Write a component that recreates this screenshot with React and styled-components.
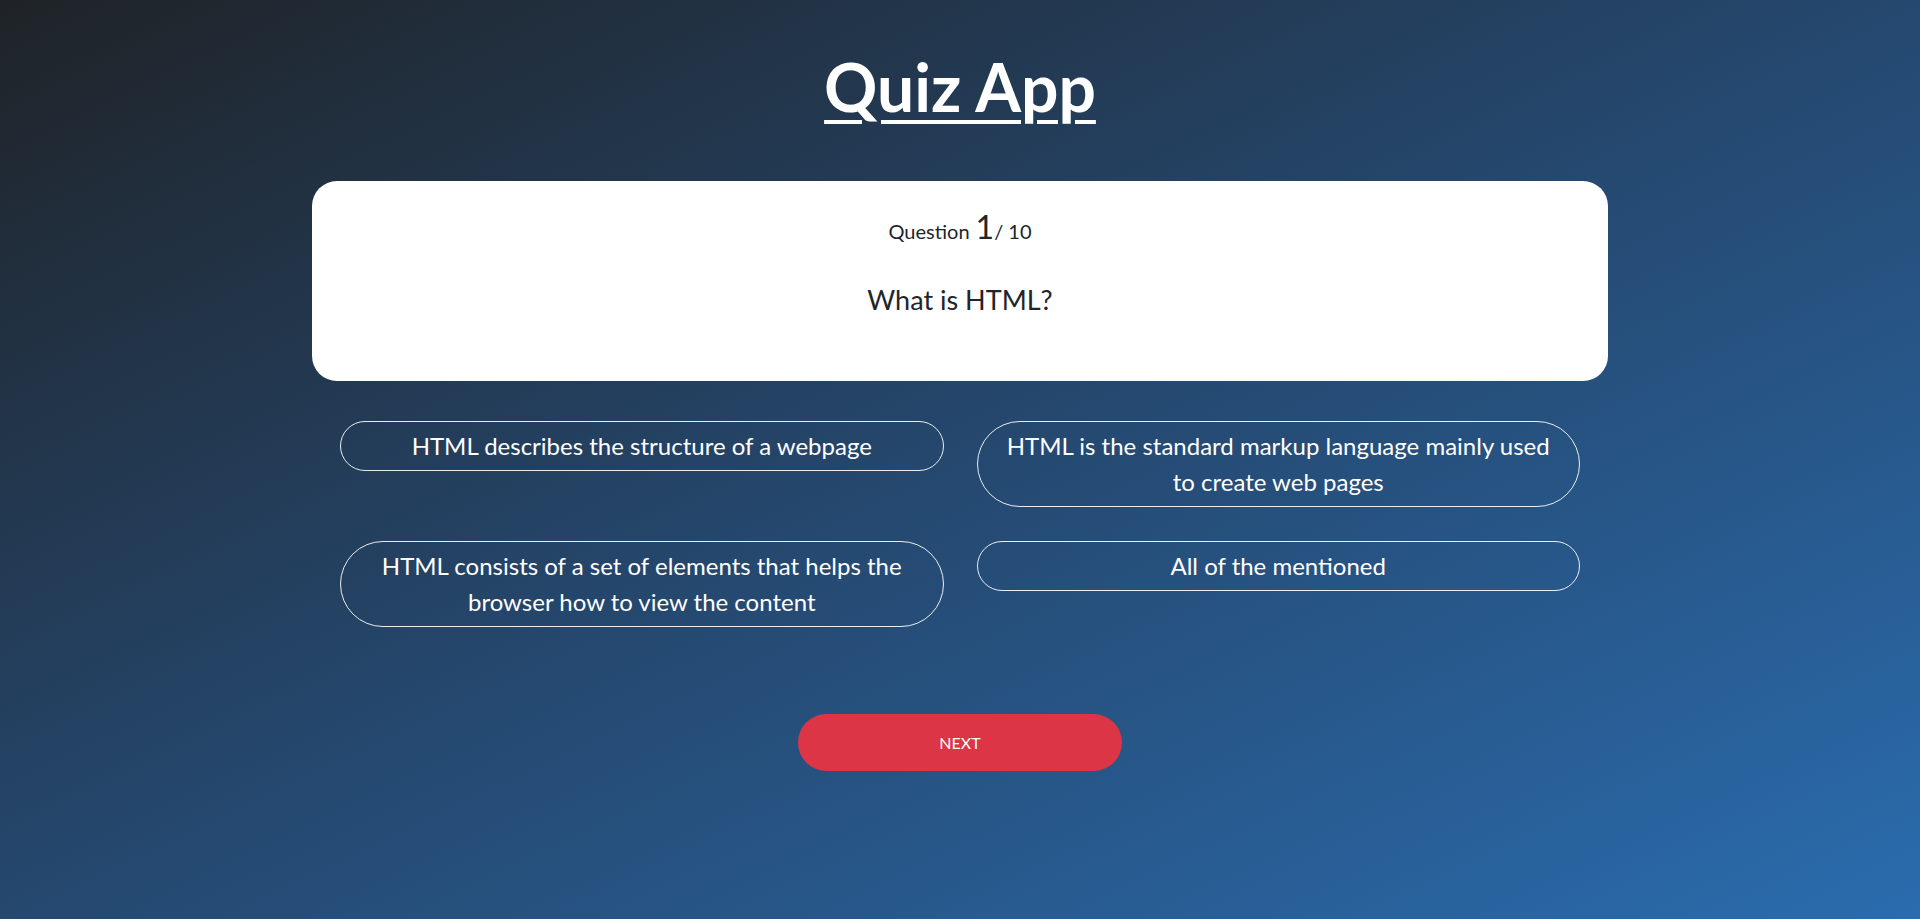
import React from "react";
import styled, { createGlobalStyle } from "styled-components";

const GlobalStyle = createGlobalStyle`
  * { box-sizing: border-box; }
  html, body { margin: 0; padding: 0; }
  body {
    font-family: Lato, "Open Sans", "Noto Sans", sans-serif;
    background: #212529;
  }
`;

const Page = styled.main`
  min-height: 100vh;
  display: flex;
  flex-direction: column;
  align-items: center;
  padding-top: 47px;
  background: linear-gradient(to bottom right, #1f2327 0%, #25486f 50%, #2a6cae 100%);
  color: #fff;
`;

const Title = styled.h1`
  margin: 0 0 55px;
  font-size: 66px;
  line-height: 1.2;
  font-weight: 700;
  text-decoration: underline;
  text-decoration-thickness: 4px;
  text-underline-offset: 8px;
  color: #fff;
`;

const Card = styled.section`
  width: 1296px;
  min-height: 200px;
  background: #fff;
  color: #212529;
  border-radius: 25px;
  padding: 27px 40px 30px;
  display: flex;
  flex-direction: column;
  align-items: center;
`;

const Count = styled.div`
  font-size: 20px;
  line-height: 1.2;
  color: #212529;
`;

const CountNum = styled.span`
  font-size: 32px;
  margin-left: 6px;
`;

const QuestionText = styled.h2`
  margin: 37px 0 0;
  font-size: 27px;
  line-height: 1.2;
  font-weight: 400;
  color: #212529;
`;

const Options = styled.div`
  width: 1240px;
  margin-top: 40px;
  display: grid;
  grid-template-columns: 1fr 1fr;
  gap: 34px 33px;
  align-items: start;
`;

const Option = styled.button`
  font-family: inherit;
  font-size: 24px;
  line-height: 1.5;
  color: #fff;
  background: transparent;
  border: 1px solid rgba(255, 255, 255, 0.9);
  border-radius: 50px;
  padding: 6px 18px;
  text-align: center;
  cursor: pointer;
`;

const NextButton = styled.button`
  margin-top: 87px;
  width: 324px;
  height: 57px;
  border: none;
  border-radius: 30px;
  background: #dc3545;
  color: #fff;
  font-family: inherit;
  font-size: 16px;
  text-transform: uppercase;
  cursor: pointer;
`;

const options = [
  "HTML describes the structure of a webpage",
  "HTML is the standard markup language mainly used to create web pages",
  "HTML consists of a set of elements that helps the browser how to view the content",
  "All of the mentioned",
];

export default function App() {
  return (
    <>
      <GlobalStyle />
      <Page>
        <Title>Quiz App</Title>
        <Card>
          <Count>
            Question<CountNum>1</CountNum>/ 10
          </Count>
          <QuestionText>What is HTML?</QuestionText>
        </Card>
        <Options>
          {options.map((o) => (
            <Option key={o}>{o}</Option>
          ))}
        </Options>
        <NextButton>Next</NextButton>
      </Page>
    </>
  );
}
